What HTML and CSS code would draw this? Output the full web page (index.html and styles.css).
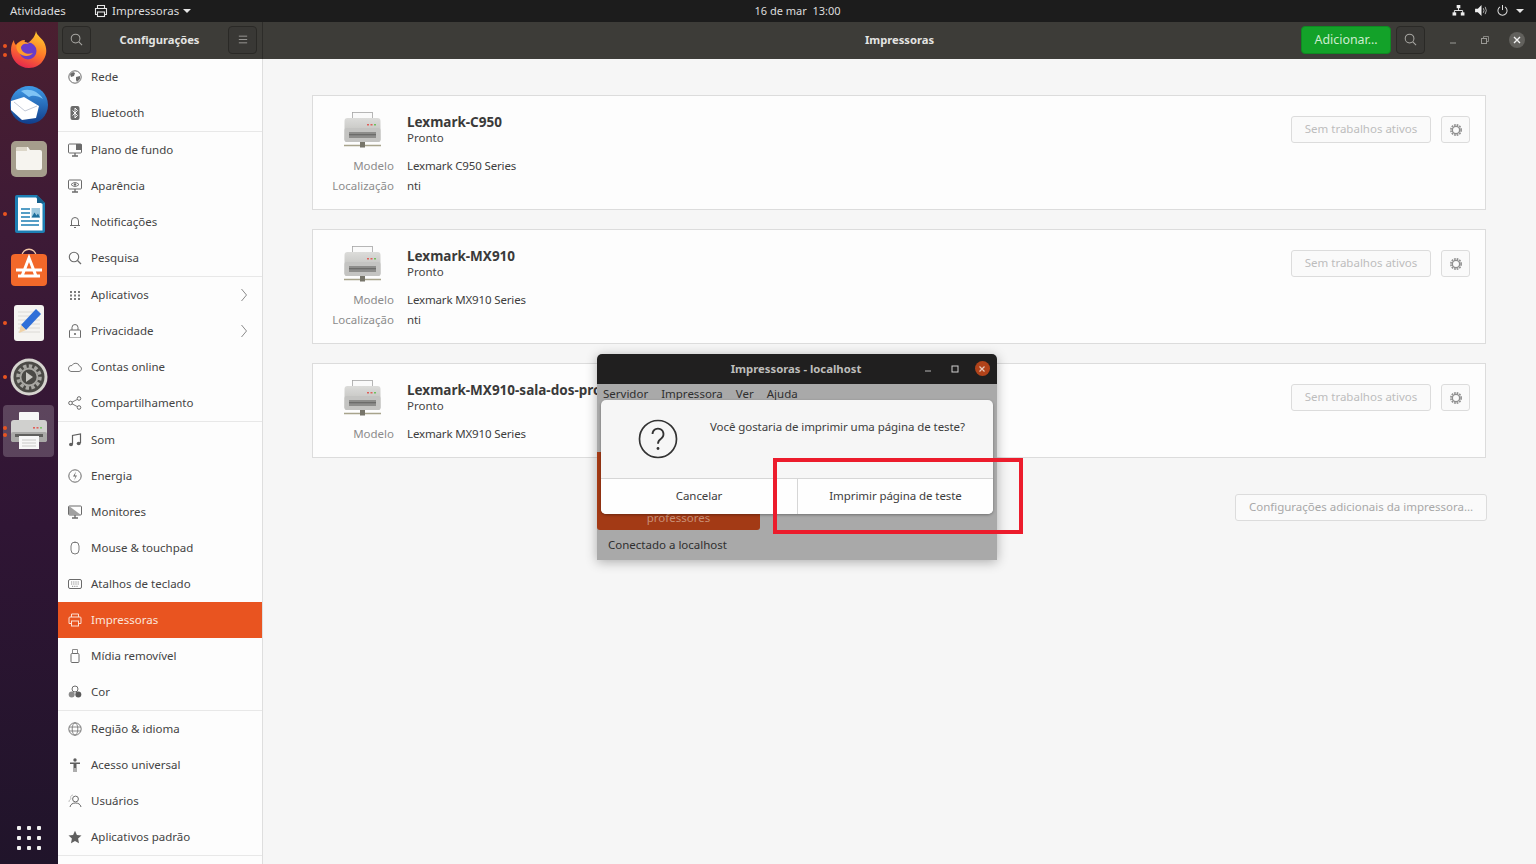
FILE: index.html
```html
<!DOCTYPE html>
<html lang="pt">
<head>
<meta charset="utf-8">
<title>Impressoras</title>
<link rel="stylesheet" href="styles.css">
</head>
<body>
<svg class="defs" width="0" height="0" aria-hidden="true">
  <defs>
    <linearGradient id="pb" x1="0" y1="0" x2="0" y2="1"><stop offset="0" stop-color="#dcdcda"/><stop offset="1" stop-color="#b5b5b2"/></linearGradient>
    <symbol id="printer" viewBox="0 0 40 38">
      <rect x="9.500" y=".5" width="20" height="9" fill="#fafafa" stroke="#a5a5a5" stroke-width=".8"/>
      <rect x="1.500" y="6" width="36" height="24" rx="3" fill="url(#pb)"/>
      <rect x="1.500" y="16" width="36" height="14" rx="2" fill="#c4c4c2"/>
      <rect x="6" y="20" width="27" height="6" fill="#8d8d8b"/>
      <rect x="6" y="22" width="27" height="1.300" fill="#6c6c6a"/>
      <rect x="24" y="12" width="2" height="1.500" fill="#e0605a"/><rect x="27.500" y="12" width="2" height="1.500" fill="#e0605a"/><rect x="31" y="12" width="2" height="1.500" fill="#6fbf5e"/>
      <path d="M1 33.500h37" stroke="#a8a48c" stroke-width="1.300"/><rect x="17" y="30" width="5" height="5.500" fill="#77756a"/>
    </symbol>
    <symbol id="printer-dock" viewBox="0 0 38 38">
      <rect x="9" y="0" width="20" height="12" rx="1" fill="#f7f7f7"/>
      <rect x="1" y="8" width="36" height="22" rx="3" fill="#d0d0ce"/>
      <rect x="1" y="20" width="36" height="10" rx="2" fill="#a9a9a7"/>
      <rect x="23" y="15" width="2" height="1.600" fill="#e0605a"/><rect x="26.500" y="15" width="2" height="1.600" fill="#e0605a"/><rect x="30" y="15" width="2" height="1.600" fill="#7fc76b"/>
      <rect x="5" y="22" width="28" height="3" fill="#5f5f5d"/>
      <rect x="9" y="24" width="20" height="13" fill="#f7f7f7"/>
      <path d="M12 28h14M12 31h14M12 34h14" stroke="#c9c9c7" stroke-width="1"/>
    </symbol>
    <symbol id="search" viewBox="0 0 14 14"><circle cx="6" cy="6" r="4.700" fill="none" stroke="currentColor" stroke-width="1.100"/><path d="M9.500 9.500 13 13" stroke="currentColor" stroke-width="1.200"/></symbol>
    <symbol id="gear" viewBox="0 0 16 16"><circle cx="8" cy="8" r="4.200" fill="none" stroke="currentColor" stroke-width="1.600"/><circle cx="8" cy="8" r="5.900" fill="none" stroke="currentColor" stroke-width="1.800" stroke-dasharray="2 1.100"/></symbol>
    <symbol id="chev" viewBox="0 0 8 14"><path d="M1.500 1 6.500 7l-5 6" fill="none" stroke="#8a8a8a" stroke-width="1"/></symbol>
  </defs>
</svg>

<header class="topbar">
  <span class="top-activities">Atividades</span>
  <span class="top-app">
    <svg class="top-app-icon" viewBox="0 0 14 14"><path d="M3.500 4V1.500h7V4M3.500 10.500H1.500V4.500h11v6h-2" fill="none" stroke="#e6e6e6" stroke-width="1.100"/><rect x="3.500" y="8" width="7" height="4.500" fill="none" stroke="#e6e6e6" stroke-width="1.100"/></svg>
    Impressoras<i class="caret"></i>
  </span>
  <span class="top-clock">16 de mar&nbsp; 13:00</span>
  <span class="top-status">
    <svg class="ts-net" viewBox="0 0 14 12"><path d="M7 3v3M2.500 9V6h9v3" fill="none" stroke="#eee" stroke-width="1"/><rect x="5" y="0" width="4" height="3.500" fill="#eee"/><rect x="0.500" y="8" width="4" height="3.500" fill="#eee"/><rect x="9.500" y="8" width="4" height="3.500" fill="#eee"/></svg>
    <svg class="ts-vol" viewBox="0 0 14 12"><path d="M0 4h3l4-4v12l-4-4H0z" fill="#eee"/><path d="M9 3.500q1.500 2.500 0 5M11 2q2.500 4 0 8" fill="none" stroke="#bbb" stroke-width="1"/></svg>
    <svg class="ts-pow" viewBox="0 0 12 12"><path d="M6 0v5.500" stroke="#ddd" stroke-width="1.100"/><path d="M3.300 2A5 5 0 1 0 8.700 2" fill="none" stroke="#ddd" stroke-width="1.100"/></svg>
    <i class="caret"></i>
  </span>
</header>

<div class="desktop">
  <nav class="dock">
    <div class="dock-item dots-2">
      <svg class="dock-icon" viewBox="0 0 40 40">
        <defs><linearGradient id="ff" x1=".7" y1="0" x2=".3" y2="1"><stop offset="0" stop-color="#ffcb2e"/><stop offset=".5" stop-color="#ff7b28"/><stop offset="1" stop-color="#e5234f"/></linearGradient></defs>
        <path d="M27 1c1 5 5 6 8 11 3 6 3 12 0 17-3 6-9 9-15 9C10 38 2 30 2 20c0-4 1-7 3-10 0 3 1 4 2 5 2-3 5-5 9-5-1 2 0 3 2 4 3-3 8-6 9-13z" fill="url(#ff)"/>
        <circle cx="19" cy="21" r="8.500" fill="#6a3bc8"/>
        <path d="M8 14c4-3 9-3 12 0-4-1-8 0-8 4 1 5 7 7 12 5-3 4-10 4-14 0-3-3-3-7-2-9z" fill="#ff9a2b"/>
      </svg>
    </div>
    <div class="dock-item">
      <svg class="dock-icon" viewBox="0 0 40 40">
        <defs><linearGradient id="tb" x1="0" y1="0" x2="0" y2="1"><stop offset="0" stop-color="#3f9be8"/><stop offset="1" stop-color="#103d8a"/></linearGradient></defs>
        <circle cx="20" cy="20" r="19" fill="url(#tb)"/>
        <path d="M12 6c8-3 17 0 22 8-6-4-11-4-14-2z" fill="#7fc4f5"/>
        <path d="M2 16 15 12l15 9-3 12-14 2-11-10z" fill="#fff"/>
        <path d="M5 17l11 9 12-5" fill="none" stroke="#c3c9d6" stroke-width="1"/>
      </svg>
    </div>
    <div class="dock-item">
      <svg class="dock-icon" viewBox="0 0 40 40">
        <rect x="2" y="2" width="36" height="36" rx="5" fill="#a59d8c"/>
        <path d="M7 10a2 2 0 0 1 2-2h10l2 3h10a2 2 0 0 1 2 2v16a2 2 0 0 1-2 2H9a2 2 0 0 1-2-2z" fill="#f6f4ef"/>
        <path d="M7 10a2 2 0 0 1 2-2h9v4H7z" fill="#dcd6c8"/>
      </svg>
    </div>
    <div class="dock-item dots-1">
      <svg class="dock-icon" viewBox="0 0 40 40">
        <path d="M8 1h20l8 8v28a2 2 0 0 1-2 2H8a2 2 0 0 1-2-2V3a2 2 0 0 1 2-2z" fill="#1d7fb4"/>
        <path d="M9 3.500h18l6.500 7V36.500H9z" fill="#fff"/>
        <path d="M28 1l8 8h-8z" fill="#15608c"/>
        <path d="M12 15h9M12 19h9M12 23h9M12 27h18M12 31h18" stroke="#1d7fb4" stroke-width="1.700"/>
        <rect x="22.500" y="14" width="8.500" height="9.500" fill="#9ec9de"/><path d="M22.500 23.500l3-5 2 3 1.500-2 2 4z" fill="#1d6f9c"/>
      </svg>
    </div>
    <div class="dock-item">
      <svg class="dock-icon" viewBox="0 0 40 40">
        <path d="M13 8c0-9 14-9 14 0" fill="none" stroke="#f4c9a8" stroke-width="1.300"/>
        <rect x="2" y="6" width="36" height="32" rx="4" fill="#f2682a"/>
        <path d="M13 28 20 10l7 18M7 22h26M9 28h22" fill="none" stroke="#fff" stroke-width="3"/>
      </svg>
    </div>
    <div class="dock-item dots-1">
      <svg class="dock-icon" viewBox="0 0 40 40">
        <rect x="5" y="2" width="30" height="36" rx="3" fill="#f5f4f1"/>
        <path d="M9 9h22M9 13h22M9 17h22M9 21h22M9 25h22M9 29h22" stroke="#dcdad6" stroke-width="1"/>
        <path d="M27 6l5 5-15 16-5-5z" fill="#2f6fd8"/>
        <path d="M12 22l5 5-7 3z" fill="#f0d2a6"/>
      </svg>
    </div>
    <div class="dock-item dots-1">
      <svg class="dock-icon" viewBox="0 0 40 40">
        <circle cx="20" cy="20" r="18.500" fill="#d6d4cf"/>
        <circle cx="20" cy="20" r="15.500" fill="#4b4a46"/>
        <circle cx="20" cy="20" r="11" fill="none" stroke="#a9a8a3" stroke-width="3.500" stroke-dasharray="3.400 2.300"/>
        <circle cx="20" cy="20" r="8.500" fill="none" stroke="#a9a8a3" stroke-width="1.800"/>
        <path d="M17 15l7 5-7 5z" fill="#c9c8c3"/>
      </svg>
    </div>
    <div class="dock-item dock-active dots-2b">
      <svg class="dock-icon" viewBox="0 0 38 38"><use href="#printer-dock"/></svg>
    </div>
    <div class="dock-grid">
      <i></i><i></i><i></i><i></i><i></i><i></i><i></i><i></i><i></i>
    </div>
  </nav>

  <div class="window">
    <div class="headerbar">
      <div class="hb-left">
        <button class="hb-btn"><svg class="ic14"><use href="#search"/></svg></button>
        <span class="hb-title">Configurações</span>
        <button class="hb-btn"><svg class="ic-menu" viewBox="0 0 12 10"><path d="M1 1h10M1 5h10M1 9h10" stroke="#a8a7a3" stroke-width="1"/></svg></button>
      </div>
      <div class="hb-right">
        <span class="hb-title hb-center">Impressoras</span>
        <button class="hb-add">Adicionar…</button>
        <button class="hb-btn"><svg class="ic14"><use href="#search"/></svg></button>
        <span class="wc">
          <svg class="wc-ic" viewBox="0 0 10 10"><path d="M2 8h6" stroke="#9a9995" stroke-width="1"/></svg>
          <svg class="wc-ic" viewBox="0 0 10 10"><rect x="1.500" y="3.500" width="5" height="5" fill="none" stroke="#9a9995"/><path d="M3.500 3V1.500h5v5H7" fill="none" stroke="#9a9995" stroke-width=".8"/></svg>
          <span class="wc-close"><svg viewBox="0 0 10 10"><path d="M2 2l6 6M8 2l-6 6" stroke="#f2f2f2" stroke-width="1.400"/></svg></span>
        </span>
      </div>
    </div>

    <div class="win-body">
      <aside class="sidebar">
        <section class="sb-group">
          <div class="sb-row"><svg class="sb-ic" viewBox="0 0 14 14"><circle cx="7" cy="7" r="6.200" fill="none" stroke="#6b6b6b" stroke-width="1"/><path d="M2 4l3-2 2 1-1 3-3 1zM8 7l4-1 0 3-3 3-1-2z" fill="#6b6b6b"/></svg>Rede</div>
          <div class="sb-row"><svg class="sb-ic" viewBox="0 0 14 14"><rect x="2.500" y="0" width="9" height="14" rx="2" fill="#6b6b6b"/><path d="M4.500 4.500l5 5L7 12V2l2.500 2.500-5 5" fill="none" stroke="#fff" stroke-width=".9"/></svg>Bluetooth</div>
        </section>
        <section class="sb-group">
          <div class="sb-row"><svg class="sb-ic" viewBox="0 0 14 14"><rect x=".5" y="1" width="13" height="9" rx="1" fill="none" stroke="#6b6b6b"/><path d="M8 1h5.500v6H8z" fill="#6b6b6b"/><path d="M4 13h6M7 10v3" stroke="#6b6b6b" stroke-width="1.300"/></svg>Plano de fundo</div>
          <div class="sb-row"><svg class="sb-ic" viewBox="0 0 14 14"><rect x=".5" y="1" width="13" height="9" rx="1" fill="none" stroke="#6b6b6b"/><path d="M3 5.500q4-4 8 0-4 4-8 0z" fill="none" stroke="#6b6b6b" stroke-width=".9"/><circle cx="7" cy="5.500" r="1.200" fill="#6b6b6b"/><path d="M4 13h6M7 10v3" stroke="#6b6b6b" stroke-width="1.300"/></svg>Aparência</div>
          <div class="sb-row"><svg class="sb-ic" viewBox="0 0 14 14"><path d="M3.500 10.500V6a3.500 3.500 0 0 1 7 0v4.500z" fill="none" stroke="#6b6b6b"/><path d="M2 10.500h10M6 12.500h2" stroke="#6b6b6b" stroke-width="1.100"/></svg>Notificações</div>
          <div class="sb-row"><svg class="sb-ic sb-muted"><use href="#search"/></svg>Pesquisa</div>
        </section>
        <section class="sb-group">
          <div class="sb-row"><svg class="sb-ic" viewBox="0 0 14 14"><path d="M2 3h2v2H2zM6 3h2v2H6zM10 3h2v2h-2zM2 6.500h2v2H2zM6 6.500h2v2H6zM10 6.500h2v2h-2zM2 10h2v2H2zM6 10h2v2H6zM10 10h2v2h-2z" fill="#7b7b7b"/></svg>Aplicativos<svg class="sb-chev"><use href="#chev"/></svg></div>
          <div class="sb-row"><svg class="sb-ic" viewBox="0 0 14 14"><rect x="1.500" y="6" width="11" height="8" rx="1" fill="none" stroke="#6b6b6b"/><path d="M4 6V3.500a3 3 0 0 1 6 0V6" fill="none" stroke="#6b6b6b"/><circle cx="7" cy="10" r="1.100" fill="#6b6b6b"/></svg>Privacidade<svg class="sb-chev"><use href="#chev"/></svg></div>
          <div class="sb-row"><svg class="sb-ic" viewBox="0 0 14 14"><path d="M3 11.500h8a2.700 2.700 0 0 0 .5-5.300A4 4 0 0 0 4 5.500a3 3 0 0 0-1 6z" fill="none" stroke="#7b7b7b"/></svg>Contas online</div>
          <div class="sb-row"><svg class="sb-ic" viewBox="0 0 14 14"><circle cx="2.500" cy="7" r="1.800" fill="none" stroke="#6b6b6b"/><circle cx="11" cy="2.500" r="1.800" fill="none" stroke="#6b6b6b"/><circle cx="11" cy="11.500" r="1.800" fill="none" stroke="#6b6b6b"/><path d="M4 6.200 9.500 3.300M4 7.800l5.500 2.900" stroke="#6b6b6b" stroke-width=".9"/></svg>Compartilhamento</div>
        </section>
        <section class="sb-group">
          <div class="sb-row"><svg class="sb-ic" viewBox="0 0 14 14"><path d="M4.500 11V2.500l8-1.500V10" fill="none" stroke="#5f5f5f" stroke-width="1.200"/><ellipse cx="3" cy="11.500" rx="2" ry="1.700" fill="#5f5f5f"/><ellipse cx="10.700" cy="10.500" rx="2" ry="1.700" fill="#5f5f5f"/></svg>Som</div>
          <div class="sb-row"><svg class="sb-ic" viewBox="0 0 14 14"><circle cx="7" cy="7" r="6.200" fill="none" stroke="#6b6b6b"/><path d="M8 2.500 5 7.500h2.500L6 11.500l3-5H6.800z" fill="#6b6b6b"/></svg>Energia</div>
          <div class="sb-row"><svg class="sb-ic" viewBox="0 0 14 14"><rect x=".5" y="1" width="13" height="9" rx="1" fill="none" stroke="#6b6b6b"/><path d="M1 1l12 9H1z" fill="#a0a0a0"/><path d="M4 13h6M7 10v3" stroke="#6b6b6b" stroke-width="1.300"/></svg>Monitores</div>
          <div class="sb-row"><svg class="sb-ic" viewBox="0 0 14 14"><rect x="3" y="1" width="8" height="12" rx="4" fill="none" stroke="#7b7b7b"/><path d="M6 1.500h2" stroke="#7b7b7b"/></svg>Mouse &amp; touchpad</div>
          <div class="sb-row"><svg class="sb-ic" viewBox="0 0 14 14"><rect x=".5" y="2.500" width="13" height="9" rx="1.500" fill="none" stroke="#6b6b6b"/><path d="M3 5h8M3 7h8M4 9.300h6" stroke="#8a8a8a" stroke-width="1" stroke-dasharray="1 .8"/></svg>Atalhos de teclado</div>
          <div class="sb-row sb-selected"><svg class="sb-ic" viewBox="0 0 14 14"><path d="M3.500 4V1h7v3M3.500 10.500H1V5a1 1 0 0 1 1-1h10a1 1 0 0 1 1 1v5.500h-2.500" fill="none" stroke="#fbe0d4" stroke-width="1"/><rect x="3.500" y="8" width="7" height="5" fill="none" stroke="#fbe0d4"/></svg>Impressoras</div>
          <div class="sb-row"><svg class="sb-ic" viewBox="0 0 14 14"><rect x="3" y="4.500" width="8" height="9" rx="1" fill="none" stroke="#6b6b6b"/><path d="M4.500 4.500V.5h5v4" fill="none" stroke="#8a8a8a"/></svg>Mídia removível</div>
          <div class="sb-row"><svg class="sb-ic" viewBox="0 0 14 14"><circle cx="7" cy="4" r="3" fill="none" stroke="#6b6b6b"/><circle cx="3.700" cy="9.500" r="3" fill="#8a8a8a"/><circle cx="10.300" cy="9.500" r="3" fill="#5a5a5a"/></svg>Cor</div>
        </section>
        <section class="sb-group">
          <div class="sb-row"><svg class="sb-ic" viewBox="0 0 14 14"><circle cx="7" cy="7" r="6.200" fill="none" stroke="#7b7b7b"/><ellipse cx="7" cy="7" rx="2.800" ry="6.200" fill="none" stroke="#7b7b7b" stroke-width=".9"/><path d="M1 5h12M1 9h12" stroke="#7b7b7b" stroke-width=".9"/></svg>Região &amp; idioma</div>
          <div class="sb-row"><svg class="sb-ic" viewBox="0 0 14 14"><circle cx="7" cy="2" r="1.700" fill="#5f5f5f"/><path d="M2 4.500h10v1.400H8.500V14h-1v-4h-1v4h-1V5.900H2z" fill="#5f5f5f"/></svg>Acesso universal</div>
          <div class="sb-row"><svg class="sb-ic" viewBox="0 0 14 14"><circle cx="7.500" cy="5" r="2.900" fill="none" stroke="#6b6b6b"/><path d="M2 13c.5-3 3-4 5.500-4s5 1 5.500 4" fill="none" stroke="#6b6b6b"/><path d="M1 8c0-2 1-2.500 2-3-1-2 0-4 2-4" fill="none" stroke="#b0b0b0" stroke-width=".8"/></svg>Usuários</div>
          <div class="sb-row"><svg class="sb-ic" viewBox="0 0 14 14"><path d="M7 .8l1.900 4.200 4.600.5-3.400 3.100.9 4.600L7 10.900 3 13.200l.9-4.600L.5 5.500l4.600-.5z" fill="#5f5f5f"/></svg>Aplicativos padrão</div>
        </section>
      </aside>

      <main class="content">
        <article class="card">
          <div class="card-grid">
            <svg class="card-icon" viewBox="0 0 40 38"><use href="#printer"/></svg>
            <div class="card-head"><h2 class="card-name">Lexmark-C950</h2><p class="card-status">Pronto</p></div>
            <span class="lbl">Modelo</span><span class="val">Lexmark C950 Series</span>
            <span class="lbl">Localização</span><span class="val">nti</span>
          </div>
          <div class="card-actions"><button class="jobs">Sem trabalhos ativos</button><button class="gear-btn"><svg class="ic-gear"><use href="#gear"/></svg></button></div>
        </article>
        <article class="card">
          <div class="card-grid">
            <svg class="card-icon" viewBox="0 0 40 38"><use href="#printer"/></svg>
            <div class="card-head"><h2 class="card-name">Lexmark-MX910</h2><p class="card-status">Pronto</p></div>
            <span class="lbl">Modelo</span><span class="val">Lexmark MX910 Series</span>
            <span class="lbl">Localização</span><span class="val">nti</span>
          </div>
          <div class="card-actions"><button class="jobs">Sem trabalhos ativos</button><button class="gear-btn"><svg class="ic-gear"><use href="#gear"/></svg></button></div>
        </article>
        <article class="card">
          <div class="card-grid">
            <svg class="card-icon" viewBox="0 0 40 38"><use href="#printer"/></svg>
            <div class="card-head"><h2 class="card-name">Lexmark-MX910-sala-dos-professores</h2><p class="card-status">Pronto</p></div>
            <span class="lbl">Modelo</span><span class="val">Lexmark MX910 Series</span>
          </div>
          <div class="card-actions"><button class="jobs">Sem trabalhos ativos</button><button class="gear-btn"><svg class="ic-gear"><use href="#gear"/></svg></button></div>
        </article>
        <div class="more-row"><button class="more">Configurações adicionais da impressora…</button></div>
      </main>
    </div>
  </div>
</div>

<section class="pwin">
  <div class="pwin-title">
    <span>Impressoras - localhost</span>
    <span class="pwin-ctl">
      <svg class="pw-ic" viewBox="0 0 10 10"><path d="M2 7h6" stroke="#b5b5b5"/></svg>
      <svg class="pw-ic" viewBox="0 0 10 10"><rect x="2" y="2" width="6" height="6" fill="none" stroke="#cfcfcf"/></svg>
      <span class="pw-close"><svg viewBox="0 0 10 10"><path d="M2.500 2.500l5 5M7.500 2.500l-5 5" stroke="#e8c9bb" stroke-width="1.200"/></svg></span>
    </span>
  </div>
  <div class="pwin-body">
    <div class="pwin-menu"><span>Servidor</span><span>Impressora</span><span>Ver</span><span>Ajuda</span></div>
    <div class="pwin-fill"><div class="pwin-orange">professores</div></div>
    <div class="pwin-status">Conectado a localhost</div>
  </div>
  <div class="msg">
    <div class="msg-top">
      <svg class="msg-q" viewBox="0 0 40 40"><circle cx="20" cy="20" r="18.500" fill="none" stroke="#333" stroke-width="1.700"/><path d="M14.500 15a5.500 5.500 0 1 1 8.500 4.700c-2 1.300-3 2.300-3 5" fill="none" stroke="#333" stroke-width="1.800"/><circle cx="20" cy="29.500" r="1.400" fill="#333"/></svg>
      <p class="msg-text">Você gostaria de imprimir uma página de teste?</p>
    </div>
    <div class="msg-btns"><button class="msg-btn msg-cancel">Cancelar</button><button class="msg-btn">Imprimir página de teste</button></div>
  </div>
</section>
<div class="redbox"></div>
</body>
</html>
```
FILE: styles.css
```css
* { box-sizing: border-box; }
html, body { margin: 0; height: 100%; overflow: hidden; }
body {
  width: 1536px; height: 864px; position: relative;
  display: flex; flex-direction: column;
  font-family: "Noto Sans", sans-serif; font-size: 11.500px; color: #3d3d3d;
  background: #f6f6f6;
}
.defs { position: absolute; }
button { font: inherit; padding: 0; margin: 0; cursor: default; }
h2, p { margin: 0; }

/* top bar */
.topbar {
  height: 22px; flex: none; background: #1c1c1c; color: #dcdcdc;
  display: flex; align-items: center; position: relative; padding: 0 0 1px 10px;
}
.top-activities { width: 84px; }
.top-app { display: flex; align-items: center; }
.top-app-icon { width: 14px; height: 14px; margin-right: 4px; }
.caret { display: inline-block; width: 0; height: 0; border: 4px solid transparent; border-top: 4.500px solid #e6e6e6; border-bottom: 0; margin-left: 4px; }
.top-clock { position: absolute; left: 0; width: 1595px; text-align: center; pointer-events: none; font-size: 11px; }
.top-status { margin-left: auto; display: flex; align-items: center; padding-right: 12px; }
.ts-net { width: 13px; height: 11px; margin-right: 10px; }
.ts-vol { width: 13px; height: 11px; margin-right: 9px; }
.ts-pow { width: 11px; height: 11px; margin-right: 5px; }
.top-status .caret { margin-left: 3px; }

/* desktop */
.desktop { flex: 1; display: flex; min-height: 0; }
.dock {
  width: 58px; flex: none; display: flex; flex-direction: column; padding-top: 1px;
  background: linear-gradient(180deg, #4b1f30 0%, #3d1a36 25%, #2f1534 60%, #20142a 100%);
}
.dock-item { height: 54.500px; display: flex; align-items: center; justify-content: center; position: relative; }
.dock-icon { width: 40px; height: 40px; }
.dots-1::before, .dots-2::before, .dots-2::after, .dots-2b::before, .dots-2b::after {
  content: ""; position: absolute; left: 3px; width: 4px; height: 4px; border-radius: 50%; background: #e95420;
}
.dots-1::before { top: 25px; }
.dots-2::before { top: 21px; }
.dots-2::after { top: 30px; }
.dots-2b::before { top: 21px; }
.dots-2b::after { top: 28px; }
.dock-active { background: rgba(255,255,255,.2); border-radius: 4px; margin: 0 4px 0 3px; height: 52px; }
.dock-active .dock-icon { width: 38px; height: 38px; }
.dock-active::before, .dock-active::after { left: 0; }
.dock-grid {
  margin-top: auto; margin-bottom: 14px; margin-left: 17px; width: 24px; height: 24px;
  display: grid; grid-template-columns: repeat(3, 4px); grid-auto-rows: 4px; gap: 6px;
}
.dock-grid i { background: #f2f2f2; border-radius: 1px; }

/* window */
.window { flex: 1; display: flex; flex-direction: column; min-width: 0; }
.headerbar { height: 37px; flex: none; background: #3d3c38; display: flex; }
.hb-left {
  width: 205px; flex: none; display: flex; align-items: center; justify-content: space-between;
  padding: 0 5px 2px 4px; border-right: 1px solid #2d2c29;
}
.hb-right { flex: 1; display: flex; align-items: center; position: relative; justify-content: flex-end; padding: 0 11px 2px 0; }
.hb-title { color: #e4e4e2; font-weight: 700; font-size: 11.200px; }
.hb-center { position: absolute; left: 0; right: 0; text-align: center; }
.hb-btn {
  width: 29px; height: 28px; background: #393835; border: 1px solid #2a2926; border-radius: 4px;
  color: #a8a7a3; display: flex; align-items: center; justify-content: center; position: relative;
}
.ic14 { width: 13px; height: 13px; }
.ic-menu { width: 10px; height: 9px; }
.hb-add {
  width: 90px; height: 28px; background: #13a229; border: 1px solid #0f8a22; border-radius: 4px;
  color: #cdeccf; margin-right: 5px; position: relative; font-size: 12.400px;
}
.wc { display: flex; align-items: center; margin-left: 23px; }
.wc-ic { width: 10px; height: 10px; margin-right: 22px; }
.wc-ic + .wc-ic { margin-right: 19px; }
.wc-close { width: 16px; height: 16px; border-radius: 50%; background: #62615d; display: flex; align-items: center; justify-content: center; }
.wc-close svg { width: 10px; height: 10px; }

.win-body { flex: 1; display: flex; min-height: 0; }
.sidebar { width: 205px; flex: none; background: #fdfdfd; border-right: 1px solid #dedede; }
.sb-group { border-bottom: 1px solid #e8e8e8; }
.sb-row { height: 36px; display: flex; align-items: center; padding: 0 0 1px 10px; position: relative; color: #444; }
.sb-ic { width: 14px; height: 14px; margin-right: 9px; flex: none; }
.sb-muted { color: #6b6b6b; }
.sb-chev { width: 8px; height: 14px; margin-left: auto; margin-right: 14px; }
.sb-selected { background: #e95420; color: #fbe6dc; }

/* content */
.content { flex: 1; padding: 36px 50px 0 49px; min-width: 0; }
.card {
  background: #fdfdfd; border: 1px solid #dcdcdc; margin-bottom: 19px;
  display: flex; justify-content: space-between; padding: 17px 15px 14px 19px;
}
.card:nth-of-type(3) { margin-bottom: 36px; }
.card-grid { display: grid; grid-template-columns: 62px auto; column-gap: 13px; grid-template-rows: 42px; grid-auto-rows: 20px; align-items: center; }
.card-icon { width: 40px; height: 38px; justify-self: center; align-self: start; margin-top: -1px; }
.card-head { height: 34px; align-self: start; }
.card-name { font-size: 13.500px; font-weight: 700; line-height: 18px; color: #3a3a3a; white-space: nowrap; }
.card-status { line-height: 15px; color: #444; margin-top: -1px; }
.lbl { text-align: right; color: #8c8c8c; white-space: nowrap; }
.val { color: #3d3d3d; white-space: nowrap; letter-spacing: -.15px; }
.card-actions { display: flex; align-items: flex-start; gap: 10px; padding-top: 3px; }
.jobs { width: 140px; height: 27px; background: #fafafa; border: 1px solid #dcdcdc; border-radius: 3px; color: #bdbdbd; padding-bottom: 2px; }
.gear-btn { width: 29px; height: 27px; background: #fafafa; border: 1px solid #dcdcdc; border-radius: 3px; display: flex; align-items: center; justify-content: center; color: #8e8e8e; }
.ic-gear { width: 14px; height: 14px; }
.more-row { display: flex; justify-content: flex-end; margin-right: -1px; }
.more { width: 252px; height: 27px; background: #fafafa; border: 1px solid #dcdcdc; border-radius: 3px; color: #a8a8a8; padding-bottom: 2px; }

/* overlay printer window */
.pwin {
  position: absolute; left: 597px; top: 354px; width: 400px; height: 206px;
  display: flex; flex-direction: column; border-radius: 5px 5px 0 0;
  box-shadow: 0 2px 12px rgba(0,0,0,.3);
}
.pwin-title {
  height: 30px; flex: none; background: #201f1f; color: #bdbdbb; font-weight: 700; font-size: 11.300px;
  border-radius: 5px 5px 0 0; display: flex; align-items: center; justify-content: center; position: relative; padding: 0 2px 2px 0;
}
.pwin-ctl { position: absolute; right: 7.500px; top: 7px; display: flex; align-items: center; }
.pw-ic { width: 10px; height: 10px; margin-right: 17px; }
.pw-ic + .pw-ic { margin-right: 14.500px; }
.pw-close { width: 15px; height: 15px; border-radius: 50%; background: #b1431a; display: flex; align-items: center; justify-content: center; }
.pw-close svg { width: 10px; height: 10px; }
.pwin-body { flex: 1; background: #a9a9a9; display: flex; flex-direction: column; color: #2f2f2f; }
.pwin-menu { height: 20px; display: flex; gap: 13px; padding: 2px 0 0 6px; flex: none; }
.pwin-fill { flex: 1; display: flex; align-items: flex-end; }
.pwin-orange { width: 163px; height: 78px; background: #a33a15; border-radius: 0 0 3px 3px; color: #c98f76; line-height: 17px; display: flex; align-items: flex-end; justify-content: center; padding-bottom: 4px; }
.pwin-status { height: 30px; flex: none; padding: 0 0 2px 11px; display: flex; align-items: center; color: #2f2f2f; }

.msg {
  position: absolute; left: 4px; top: 46px; width: 392px; height: 114px;
  border-radius: 5px; background: #f6f6f6; box-shadow: 0 1px 3px rgba(0,0,0,.35);
  display: flex; flex-direction: column; overflow: hidden; color: #3d3d3d;
}
.msg-top { height: 79px; flex: none; display: flex; border-bottom: 1px solid #d6d6d6; padding: 19px 0 0 37px; }
.msg-q { width: 40px; height: 40px; margin-right: 32px; flex: none; }
.msg-text { line-height: 16px; white-space: nowrap; letter-spacing: -.07px; }
.msg-btns { flex: 1; display: flex; }
.msg-btn { flex: 1; background: #fefefe; border: 0; color: #3d3d3d; padding-bottom: 2px; letter-spacing: -.08px; }
.msg-cancel { flex: none; width: 197px; border-right: 1px solid #d6d6d6; }

.redbox { position: absolute; left: 773px; top: 458px; width: 250px; height: 76px; border: 4px solid #ec1c2c; }
```
